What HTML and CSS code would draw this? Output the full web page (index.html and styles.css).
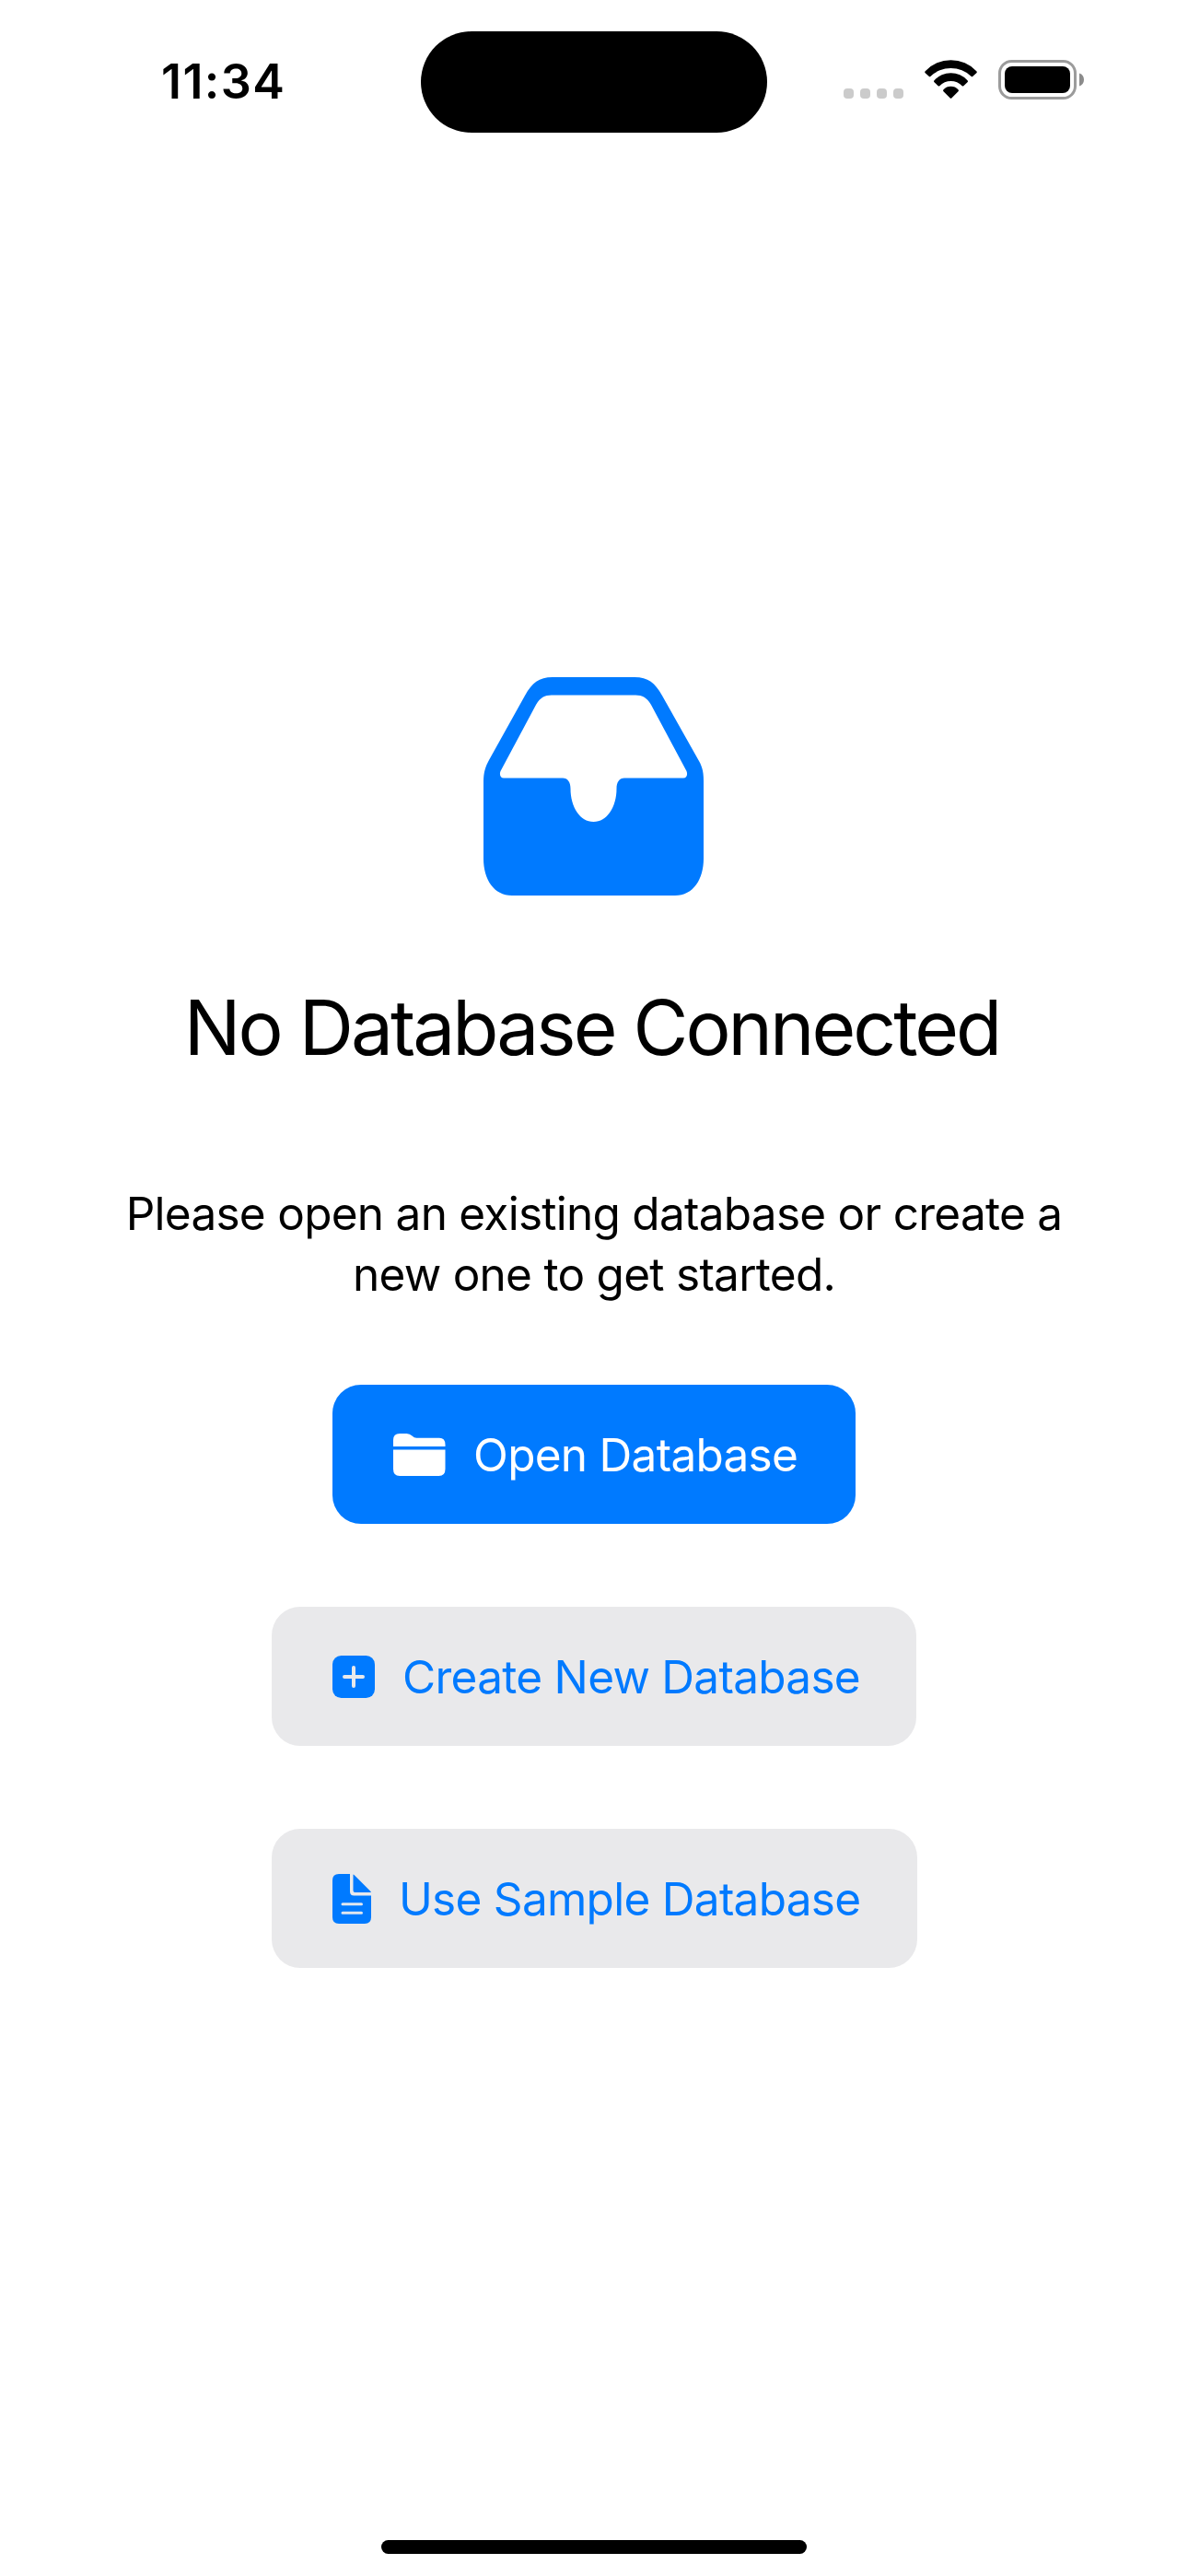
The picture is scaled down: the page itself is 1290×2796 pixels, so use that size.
FILE: index.html
```html
<!DOCTYPE html>
<html lang="en">
<head>
<meta charset="utf-8">
<title>No Database Connected</title>
<link rel="stylesheet" href="styles.css">
</head>
<body>
<div class="screen">
  <header class="status">
    <span class="time">11:34</span>
    <div class="island"></div>
    <div class="indicators">
      <div class="dots"><i></i><i></i><i></i><i></i></div>
      <svg class="wifi" width="58" height="43" viewBox="0 0 58 43">
        <path d="M.7 12.200A38.200 38.200 0 0 1 56.300 12.200Q57.300 13.200 56.300 14.200L52.100 18Q51.400 18.500 50.700 17.900A32.100 32.100 0 0 0 6.300 17.900Q5.600 18.500 4.900 18L.7 14.200Q-.3 13.200 .7 12.200Z"/>
        <path d="M10.500 22.200A24.200 24.200 0 0 1 46.500 22.200Q47.500 23.200 46.500 24.200L42.300 28.200Q41.500 28.900 40.700 28.200A16.900 16.900 0 0 0 16.300 28.200Q15.500 28.900 14.700 28.200L10.500 24.200Q9.500 23.200 10.500 22.200Z"/>
        <path d="M20.500 32.200A10.900 10.900 0 0 1 36.500 32.200Q37.500 33.200 36.500 34.200L29.500 41.300Q28.500 42.300 27.500 41.300L20.500 34.200Q19.500 33.200 20.500 32.200Z"/>
      </svg>
      <svg class="battery" width="94" height="43" viewBox="0 0 94 43">
        <rect x="1.500" y="1.500" width="82" height="40" rx="13" fill="none" stroke="#9b9b9b" stroke-width="3"/>
        <rect x="7" y="7" width="71" height="29" rx="8"/>
        <path fill="#8b8b8b" d="M88 14.500C91 15.500 93 18 93 21.500S91 27.500 88 28.500Z"/>
      </svg>
    </div>
  </header>

  <main class="content">
    <svg class="tray" width="240" height="238" viewBox="0 0 240 238" fill="#007aff">
      <path fill-rule="evenodd" d="M75 0H164C179 0 186 6 194 20L234 91C238 98 239 104 239 113V197C239 219 228 237 208 237H31C11 237 0 219 0 197V113C0 104 2 97 6 90L45 20C53 6 60 0 75 0ZM74 19.500C66 19.500 61 23 57 30L18.500 102C17 106 18.500 109.500 22 109.500H86C91.500 109.500 94.500 114 94.500 121C94.500 141 105 157 119.500 157S144.500 141 144.500 121C144.500 114 147.500 109.500 153 109.500H217C220.500 109.500 222 106 220.500 102L182 30C178 23 173 19.500 165 19.500Z"/>
    </svg>
    <h1 class="title">No Database Connected</h1>
    <p class="message">Please open an existing database or create a<br>new one to get started.</p>
    <div class="actions">
      <button class="button primary">
        <svg class="icon" width="57" height="46" viewBox="0 0 57 46">
          <path fill="currentColor" d="M0 14V7Q0 0 7 0H14.500Q18 0 20.500 2.500T26 4.700H50Q56.500 4.700 56.500 12V14ZM0 17.500H56.500V38.500Q56.500 46 49.500 46H7Q0 46 0 38.500Z"/>
        </svg>
        <span class="label">Open Database</span>
      </button>
      <button class="button create">
        <svg class="icon" width="46" height="46" viewBox="0 0 46 46">
          <rect width="46" height="46" rx="9.500" fill="currentColor"/>
          <path d="M23 13V33M13 23H33" fill="none" stroke="#e9e9eb" stroke-width="4" stroke-linecap="round"/>
        </svg>
        <span class="label">Create New Database</span>
      </button>
      <button class="button sample">
        <svg class="icon" width="42" height="54" viewBox="0 0 42 54">
          <path fill="currentColor" d="M7 0H19V19Q19 23.500 23.500 23.500H42V47Q42 54 35 54H7Q0 54 0 47V7Q0 0 7 0ZM22.500 .5Q23 .5 24 1.500L41 18.500Q42 19.500 42 20H24.500Q22.500 20 22.500 18Z"/>
          <path d="M11 32.800H31.500M11 42.300H31.500" stroke="#e0e6ee" stroke-width="3" stroke-linecap="round"/>
        </svg>
        <span class="label">Use Sample Database</span>
      </button>
    </div>
  </main>
  <div class="home"></div>
</div>
</body>
</html>
```
FILE: styles.css
```css
* { box-sizing: border-box; }
body { margin: 0; background: #fff; }
.screen {
  width: 1290px;
  height: 2796px;
  display: flex;
  flex-direction: column;
  align-items: center;
  background: #fff;
  color: #000;
  font-family: Inter, "Liberation Sans", sans-serif;
}
.status {
  width: 100%;
  height: 178px;
  display: grid;
  grid-template-columns: 457px 376px 457px;
  align-items: start;
}
.time {
  padding: 57px 0 0 175px;
  font-size: 52px;
  line-height: 64px;
  font-weight: 600;
  letter-spacing: 1.4px;
  white-space: nowrap;
}
.island { height: 110px; margin-top: 34px; border-radius: 55px; background: #000; }
.indicators { display: flex; align-items: flex-end; margin: 65px 0 0 83px; height: 43px; }
.dots { display: flex; gap: 7px; width: 65px; margin-bottom: 1px; }
.dots i { width: 11px; height: 11px; border-radius: 4px; background: #cbcbcb; }
.wifi { margin-left: 23px; }
.battery { margin-left: 22px; }
.content { display: flex; flex-direction: column; align-items: center; padding-top: 557px; }
.tray { display: block; }
.title {
  margin: 93px 0 0;
  padding-right: 5px;
  font-size: 82px;
  line-height: 100px;
  font-weight: 400;
  letter-spacing: -3px;
  white-space: nowrap;
}
.message {
  margin: 118px 0 0;
  font-size: 49.5px;
  line-height: 66px;
  letter-spacing: -0.73px;
  text-align: center;
  white-space: nowrap;
}
.actions { display: flex; flex-direction: column; align-items: center; gap: 90px; margin-top: 87px; }
.button {
  display: flex;
  align-items: center;
  height: 151px;
  padding: 0 66px;
  border: 0;
  border-radius: 31px;
  background: #e9e9eb;
  color: #007aff;
  font-family: inherit;
  font-size: 49.5px;
  line-height: 60px;
  letter-spacing: -0.72px;
  white-space: nowrap;
}
.primary { width: 568px; background: #007aff; color: #fff; }
.create { width: 700px; }
.sample { width: 701px; margin-left: 1px; }
.icon { flex: none; }
.label { margin-left: 30px; }
.home { width: 462px; height: 15px; margin-top: auto; margin-bottom: 24px; border-radius: 8px; background: #000; }
```
